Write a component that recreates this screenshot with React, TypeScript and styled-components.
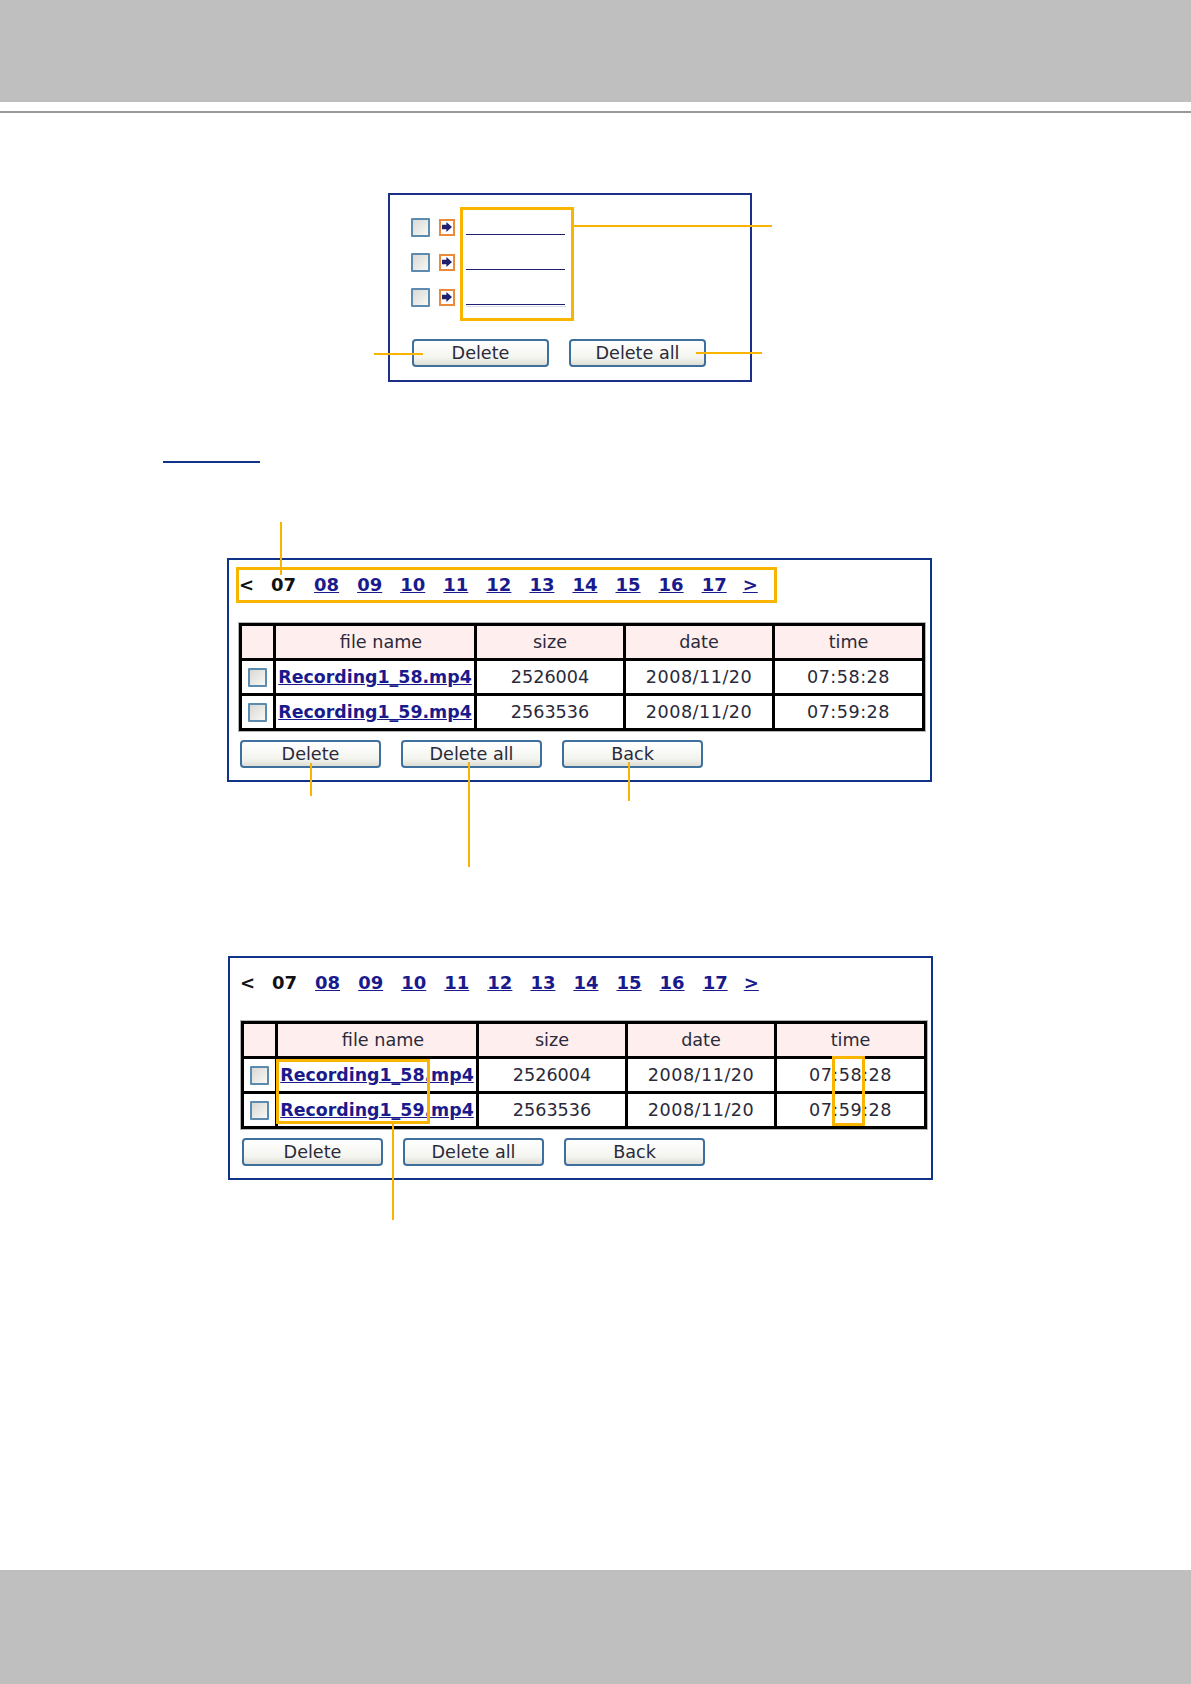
import React from 'react';
import styled, { createGlobalStyle } from 'styled-components';

const GlobalStyle = createGlobalStyle`
  html, body {
    margin: 0;
    padding: 0;
    background: #fff;
  }
`;

const YELLOW = '#f9b400';
const FONT = `'DejaVu Sans', Verdana, sans-serif`;

const HOURS = ['08', '09', '10', '11', '12', '13', '14', '15', '16', '17'];

const FILES = [
  { name: 'Recording1_58.mp4', size: '2526004', date: '2008/11/20', time: '07:58:28' },
  { name: 'Recording1_59.mp4', size: '2563536', date: '2008/11/20', time: '07:59:28' },
];

const ArrowIcon: React.FC = () => (
  <ArrowBox>
    <svg width="12" height="12" viewBox="0 0 12 12">
      <path d="M1 3.8h4.4V1L11 6l-5.6 5V8.2H1z" fill="#1f2170" />
    </svg>
  </ArrowBox>
);

const RecordingPanel: React.FC<{
  indent: number;
  gapTop: number;
  shift: number;
  children?: React.ReactNode;
}> = ({ indent, gapTop, shift, children }) => (
  <BigPanel $indent={indent} $gapTop={gapTop}>
    <HourNav>
      <HourPrev>&lt;</HourPrev>
      <CurrentHour>07</CurrentHour>
      {HOURS.map((h) => (
        <HourLink href="#" key={h}>
          {h}
        </HourLink>
      ))}
      <HourLink href="#">&gt;</HourLink>
    </HourNav>
    <FileTable $shift={shift}>
      <colgroup>
        <col width="34" />
        <col width="201" />
        <col width="149" />
        <col width="149" />
        <col width="150" />
      </colgroup>
      <thead>
        <tr>
          <Th />
          <Th $nudge={12}>file name</Th>
          <Th>size</Th>
          <Th>date</Th>
          <Th>time</Th>
        </tr>
      </thead>
      <tbody>
        {FILES.map((f) => (
          <tr key={f.name}>
            <Td>
              <CheckBox $center />
            </Td>
            <Td>
              <FileLink href="#">{f.name}</FileLink>
            </Td>
            <Td>{f.size}</Td>
            <Td $wide>{f.date}</Td>
            <Td $wide>{f.time}</Td>
          </tr>
        ))}
      </tbody>
    </FileTable>
    <ButtonRow $shift={shift}>
      <ActionButton>Delete</ActionButton>
      <ActionButton>Delete all</ActionButton>
      <ActionButton>Back</ActionButton>
    </ButtonRow>
    {children}
  </BigPanel>
);

const App: React.FC = () => (
  <Page>
    <GlobalStyle />
    <TopBand />
    <Rule />
    <Main>
      <SmallPanel>
        <FileRows>
          {[0, 1, 2].map((i) => (
            <FileRow key={i}>
              <CheckBox />
              <ArrowIcon />
              <BlankLink />
            </FileRow>
          ))}
        </FileRows>
        <FaintLine />
        <SmallButtons>
          <ActionButton>Delete</ActionButton>
          <ActionButton>Delete all</ActionButton>
        </SmallButtons>
        <Frame $x={70} $y={12} $w={114} $h={114} />
        <HLine $x={183} $y={30} $w={199} />
        <HLine $x={-16} $y={158} $w={49} />
        <HLine $x={306} $y={157} $w={66} />
      </SmallPanel>

      <HeadingRule />

      <RecordingPanel indent={227} gapTop={95} shift={1}>
        <Frame $x={7} $y={7} $w={541} $h={36} />
        <VLine $x={51} $y={-38} $h={53} />
        <VLine $x={81} $y={203} $h={33} />
        <VLine $x={239} $y={202} $h={105} />
        <VLine $x={399} $y={202} $h={39} />
      </RecordingPanel>

      <RecordingPanel indent={228} gapTop={174} shift={2}>
        <Frame $x={46} $y={101} $w={154} $h={65} />
        <Frame $x={602} $y={98} $w={33} $h={70} />
        <VLine $x={162} $y={166} $h={96} />
      </RecordingPanel>
    </Main>
    <BottomBand />
  </Page>
);

export default App;

const Page = styled.div`
  display: flex;
  flex-direction: column;
  width: 1191px;
  height: 1684px;
  overflow: hidden;
  font-family: ${FONT};
  color: #2a2a3a;
`;

const TopBand = styled.div`
  height: 102px;
  background: #bebfbe;
`;

const Rule = styled.div`
  height: 2px;
  margin-top: 9px;
  background: #999;
`;

const Main = styled.main`
  flex: 1;
  padding-top: 80px;
`;

const BottomBand = styled.div`
  height: 114px;
  background: #bebfbe;
`;

const SmallPanel = styled.section`
  position: relative;
  box-sizing: border-box;
  width: 364px;
  height: 189px;
  margin-left: 388px;
  padding: 22px 0 0 21px;
  border: 2px solid #1b2f86;
`;

const FileRows = styled.div`
  display: flex;
  flex-direction: column;
  gap: 15px;
`;

const FileRow = styled.div`
  display: flex;
  align-items: center;
  height: 20px;
`;

const BlankLink = styled.span`
  align-self: flex-start;
  width: 99px;
  height: 17px;
  margin-left: 11px;
  border-bottom: 1px solid #1f2170;
`;

const FaintLine = styled.div`
  width: 100px;
  height: 1px;
  margin: -1px 0 0 55px;
  background: #d8dcec;
`;

const SmallButtons = styled.div`
  display: flex;
  gap: 20px;
  margin: 32px 0 0 1px;

  button {
    width: 137px;
  }
`;

const ArrowBox = styled.span`
  display: flex;
  align-items: center;
  justify-content: center;
  box-sizing: border-box;
  width: 16px;
  height: 17px;
  margin-left: 9px;
  border: 2px solid #ec8a3c;
  background: #fff;
`;

const CheckBox = styled.span<{ $center?: boolean }>`
  display: block;
  box-sizing: border-box;
  width: 19px;
  height: 19px;
  margin: ${(p) => (p.$center ? '0 auto' : '0')};
  border: 2px solid #5c8bb0;
  border-radius: 1px;
  background: linear-gradient(135deg, #d8d8d4, #f8f8f6);
`;

const ActionButton = styled.button`
  box-sizing: border-box;
  width: 141px;
  height: 28px;
  padding: 2px 0 0;
  border: 2px solid #3f6f9c;
  border-radius: 4px;
  background: linear-gradient(#fff, #f4f4ef 70%, #deded6);
  font-family: ${FONT};
  font-size: 17.6px;
  line-height: 1;
  color: #2a2a3a;
`;

const BigPanel = styled.section<{ $indent: number; $gapTop: number }>`
  position: relative;
  box-sizing: border-box;
  width: 705px;
  height: 224px;
  margin: ${(p) => p.$gapTop}px 0 0 ${(p) => p.$indent}px;
  padding: 12px 9px 0;
  border: 2px solid #10338a;
`;

const HeadingRule = styled.div`
  width: 97px;
  height: 2px;
  margin: 79px 0 0 163px;
  background: #10338a;
`;

const HourNav = styled.nav`
  display: flex;
  align-items: center;
  gap: 18px;
  height: 24px;
  font-size: 18px;
  font-weight: 700;
`;

const HourPrev = styled.span`
  width: 14px;
  margin-left: 1px;
  color: #111;
`;

const CurrentHour = styled.span`
  color: #111;
`;

const HourLink = styled.a`
  color: #1a1a8c;
  text-decoration: underline;

  &:last-child {
    margin-left: -2px;
  }
`;

const FileTable = styled.table<{ $shift: number }>`
  width: 683px;
  height: 105px;
  margin: 27px 0 0 ${(p) => p.$shift}px;
  border-collapse: collapse;
  table-layout: fixed;
  border: 3px solid #000;
  box-shadow: 0 0 0 1px #b5b5b5;
`;

const Th = styled.th<{ $nudge?: number }>`
  height: 32px;
  padding: 0 0 0 ${(p) => p.$nudge ?? 0}px;
  border: 3px solid #000;
  background: #ffeeee;
  font-size: 17.6px;
  font-weight: 400;
`;

const Td = styled.td<{ $wide?: boolean }>`
  height: 32px;
  padding: 0;
  border: 3px solid #000;
  font-size: 17.6px;
  letter-spacing: ${(p) => (p.$wide ? '0.5px' : '0')};
  text-align: center;
`;

const FileLink = styled.a`
  font-size: 17.4px;
  font-weight: 700;
  color: #1a1a8c;
  text-decoration: underline;
`;

const ButtonRow = styled.div<{ $shift: number }>`
  display: flex;
  gap: 20px;
  margin: 9px 0 0 ${(p) => p.$shift + 1}px;
`;

/* callout marks drawn on top of the screenshots */
const Frame = styled.div<{ $x: number; $y: number; $w: number; $h: number }>`
  position: absolute;
  left: ${(p) => p.$x}px;
  top: ${(p) => p.$y}px;
  box-sizing: border-box;
  width: ${(p) => p.$w}px;
  height: ${(p) => p.$h}px;
  border: 3px solid ${YELLOW};
  pointer-events: none;
`;

const HLine = styled.div<{ $x: number; $y: number; $w: number }>`
  position: absolute;
  left: ${(p) => p.$x}px;
  top: ${(p) => p.$y}px;
  width: ${(p) => p.$w}px;
  height: 2px;
  background: ${YELLOW};
`;

const VLine = styled.div<{ $x: number; $y: number; $h: number }>`
  position: absolute;
  left: ${(p) => p.$x}px;
  top: ${(p) => p.$y}px;
  width: 2px;
  height: ${(p) => p.$h}px;
  background: ${YELLOW};
`;
